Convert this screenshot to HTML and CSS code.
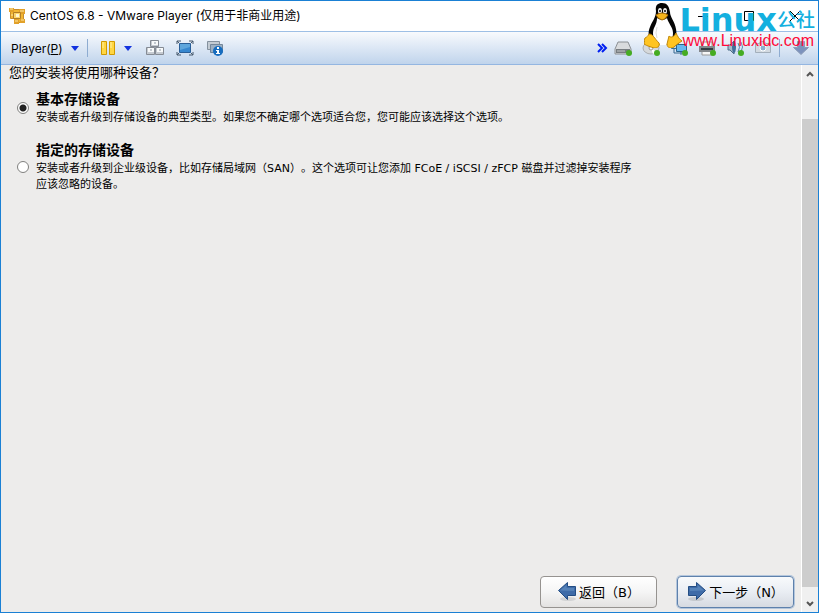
FILE: index.html
```html
<!DOCTYPE html>
<html lang="zh-CN">
<head>
    <meta charset="UTF-8">
    <meta name="viewport" content="width=device-width, initial-scale=1.0">
    <title>CentOS 6.8 - VMware Player</title>
    <link rel="stylesheet" href="styles.css">
</head>
<body>
    <div class="window">
        <header class="title-bar">
            <svg class="app-icon" viewBox="0 0 16 16">
                <path d="M1.500 1.500h9v3h4v10h-8v-4h-5z" fill="#f2b632" stroke="#c78d2c"/>
                <path d="M0 0h5v4H0zM10 1h6v5h-6zM5 11h5v5H5zM11 11h5v4h-5z" fill="#e2a12a"/>
                <path d="M4.500 4.500h7v6h-7z" fill="#fbd56c" stroke="#b17d28"/>
                <path d="M7 6h3v3H7z" fill="#fff6d5"/>
                <path d="M1 1h3M11 3h4M6 13h3M12 12h3M2 7h2" stroke="#ffe9a4"/>
            </svg>
            <h1>CentOS 6.8 - VMware Player (仅用于非商业用途)</h1>
            <div class="window-controls">
                <button type="button" aria-label="Minimize"><svg viewBox="0 0 12 12"><path d="M1 6.500h10" stroke="#000"/></svg></button>
                <button type="button" aria-label="Maximize"><svg viewBox="0 0 12 12"><path d="M1.500 1.500h9v9h-9z" fill="none" stroke="#000"/></svg></button>
                <button type="button" aria-label="Close"><svg viewBox="0 0 12 12"><path d="M1 1l10 10M11 1L1 11" stroke="#000"/></svg></button>
            </div>
        </header>

        <nav class="toolbar">
            <div class="tools">
                <button type="button" class="player-menu"><span>Player(<u>P</u>)</span><svg class="caret" viewBox="0 0 8 5"><path d="M0 0h8L4 5z" fill="#1232df"/></svg></button>
                <span class="separator"></span>
                <button type="button" class="pause" aria-label="Pause">
                    <svg class="pause-icon" viewBox="0 0 16 16"><path d="M1.500 1.500h5v13h-5zM9.500 1.500h5v13h-5z" fill="#ffd643" stroke="#d19a00"/><path d="M3 2v6M11 2v6" stroke="#fff0a2"/></svg>
                    <svg class="caret" viewBox="0 0 8 5"><path d="M0 0h8L4 5z" fill="#1232df"/></svg>
                </button>
                <button type="button" aria-label="Send Ctrl+Alt+Del">
                    <svg viewBox="0 0 18 16"><path d="M4.500 6.500v-6h8v6zM.5 14.500v-7h8v7zM9.500 14.500v-7h8v7z" fill="#c5cad1" stroke="#858b94"/><path d="M6 1h6v4H6zM2 8h6v4H2zM11 8h6v4h-6z" fill="#f8fafb"/><path d="M8 3h2M4 10h2M13 10h2" stroke="#8d98a6"/></svg>
                </button>
                <button type="button" aria-label="Full screen">
                    <svg viewBox="0 0 18 16"><path d="M3.500 3.500h11v9h-11z" fill="#3787cf" stroke="#2a5f98"/><path d="M4 4h10v3L4 10z" fill="#5ea6dc"/><path d="M1 4V1h4M13 1h4v3M17 12v3h-4M5 15H1v-3M1 1l2 2M17 1l-2 2M1 15l2-2M17 15l-2-2" fill="none" stroke="#46586c"/></svg>
                </button>
                <button type="button" aria-label="Unity">
                    <svg viewBox="0 0 18 16"><path d="M1.500 1.500h12v8h-12z" fill="#c3cbd3" stroke="#84919e"/><path d="M4.500 4.500h12v8h-12z" fill="#9db0c3" stroke="#74879a"/><circle cx="12" cy="11" r="5" fill="#176dbf"/><path d="M11 7h2v2h-2zM11 10h2v3h1v1h-4v-1h1v-2h-1v-1z" fill="#fff"/></svg>
                </button>
            </div>
            <div class="devices">
                <button type="button" class="more" aria-label="More"><svg viewBox="0 0 18 16"><path d="M5 4l4 4-4 4M9 4l4 4-4 4" fill="none" stroke="#001ff0" stroke-width="2"/></svg></button>
                <button type="button" aria-label="Hard disk"><svg viewBox="0 0 18 16"><path d="M4 2h10l3 7v5H1V9z" fill="#d9dbdd" stroke="#8c9094"/><path d="M2 9h14v4H2z" fill="#777c80"/><path d="M3 11h8" stroke="#c5c8c9"/><circle cx="15" cy="13" r="3" fill="#45ac22"/></svg></button>
                <button type="button" aria-label="CD/DVD"><svg viewBox="0 0 18 16"><ellipse cx="9" cy="8" rx="8" ry="6" fill="#d6d9db" stroke="#a9adb1"/><path d="M9 8L3 4l4-2zM9 8l6 4-4 2z" fill="#fff"/><circle cx="9" cy="8" r="2" fill="#f7f8f8" stroke="#999"/><circle cx="15" cy="13" r="3" fill="#45ac22"/></svg></button>
                <button type="button" aria-label="Network"><svg viewBox="0 0 18 16"><path d="M1.500 2.500h7v6h-7z" fill="#bad8ec" stroke="#356a93"/><path d="M6.500 4.500h10v7h-10z" fill="#65b8f0" stroke="#28638c"/><path d="M4 8v5h8M11 12v3" fill="none" stroke="#37698f"/><circle cx="15" cy="13" r="3" fill="#45ac22"/></svg></button>
                <button type="button" aria-label="Printer"><svg viewBox="0 0 18 16"><path d="M4 2h10v5H4zM4 10h10v5H4z" fill="#f6f6f6" stroke="#999"/><path d="M1 6h16v6H1z" fill="#83878b"/><path d="M3 9h12" stroke="#343e44" stroke-width="2"/><circle cx="15" cy="13" r="3" fill="#45ac22"/></svg></button>
                <button type="button" aria-label="Sound"><svg viewBox="0 0 18 16"><path d="M2 5h2l4-4v13l-4-4H2z" fill="#a9bac8" stroke="#4d6e89"/><ellipse cx="8" cy="7" rx="2" ry="6" fill="#416f9a"/><path d="M12 3q3 4 0 9M15 2q3 5 0 10" fill="none" stroke="#5284b4"/><circle cx="15" cy="13" r="3" fill="#45ac22"/></svg></button>
                <button type="button" aria-label="Camera"><svg viewBox="0 0 18 16"><path d="M1.500 3.500h4l1-2h4l1 2h5v9h-15z" fill="#d3dae1" stroke="#a3afbb"/><circle cx="9" cy="8" r="3" fill="#8aafce" stroke="#fff"/></svg></button>
                <span class="separator"></span>
                <button type="button" class="expand" aria-label="Show devices"><svg viewBox="0 0 18 16"><path d="M5.500 1.500h7v6h4L9 14.500 1.500 7.500h4z" fill="#7c92bd" stroke="#8d9db8"/></svg></button>
            </div>
        </nav>

        <div class="guest">
            <main class="installer">
                <form class="storage-form">
                    <fieldset>
                        <legend>您的安装将使用哪种设备？</legend>
                        <div class="option">
                            <input type="radio" id="basic" name="storage" checked>
                            <label for="basic"><strong>基本存储设备</strong><span>安装或者升级到存储设备的典型类型。如果您不确定哪个选项适合您，您可能应该选择这个选项。</span></label>
                        </div>
                        <div class="option">
                            <input type="radio" id="specialized" name="storage">
                            <label for="specialized"><strong>指定的存储设备</strong><span>安装或者升级到企业级设备，比如存储局域网（SAN）。这个选项可让您添加 FCoE / iSCSI / zFCP 磁盘并过滤掉安装程序应该忽略的设备。</span></label>
                        </div>
                    </fieldset>
                    <div class="actions">
                        <button type="button" class="btn"><svg viewBox="0 0 20 20"><ellipse cx="11" cy="18" rx="8" ry="2" fill="#d3d4d5"/><path d="M1.500 9.500l9-8v4h8v9h-8v4z" fill="#3e6ba8" stroke="#234d84"/><path d="M3 9.500L9.500 4v3H17v3z" fill="#5683b9"/></svg>返回（B）</button>
                        <button type="button" class="btn btn-next"><svg viewBox="0 0 20 20"><ellipse cx="9" cy="18" rx="8" ry="2" fill="#c5c9ce"/><path d="M18.500 9.500l-9-8v4h-8v9h8v4z" fill="#3e6ba8" stroke="#234d84"/><path d="M17 9.500L10.500 4v3H3v3z" fill="#5683b9"/></svg>下一步（N）</button>
                    </div>
                </form>
            </main>
            <aside class="scrollbar">
                <button type="button" aria-label="Scroll up"><svg viewBox="0 0 8 8"><path d="M1 6l3-3 3 3" fill="none" stroke="#555" stroke-width="2"/></svg></button>
                <div class="track"><div class="thumb"></div></div>
                <button type="button" aria-label="Scroll down"><svg viewBox="0 0 8 8"><path d="M1 2l3 3 3-3" fill="none" stroke="#555" stroke-width="2"/></svg></button>
            </aside>
        </div>

        <div class="watermark">
            <svg viewBox="0 0 38 46">
                <path d="M12 9C11 3 14 1 18 1c5 0 7 3 8 9 0 5 5 10 6 17 1 5 0 10-3 13l-6 3H14l-7-5c-3-4-3-8-1-13 2-6 6-9 6-16z" fill="#050505"/>
                <path d="M13 16c3 2 8 2 10 0 1 5 6 9 6 15 0 6-3 11-7 12h-6c-5-2-7-7-7-12 0-6 4-8 4-15z" fill="#fff"/>
                <path d="M13 25q-2 6 0 11" fill="none" stroke="#ddd"/>
                <ellipse cx="16" cy="9" rx="2" ry="3" fill="#eee"/><ellipse cx="21" cy="9" rx="2" ry="3" fill="#eee"/>
                <circle cx="16" cy="9" r="1"/><circle cx="21" cy="9" r="1"/>
                <path d="M12 13q6-4 12 0-3 5-6 5-4-1-6-5z" fill="#f6b51b" stroke="#a66b05"/>
                <path d="M5 32c4 0 5 4 10 9 1 3-1 5-5 5-3-1-7-2-10-4 1-2 0-5 1-6 2-1 3-2 4-4z" fill="#ffc421" stroke="#c18708"/>
                <path d="M25 34c2 2 5 1 7-3 2 4 3 6 6 8-3 2-5 3-8 6-3 2-7 1-7-3z" fill="#ffc421" stroke="#c18708"/>
            </svg>
            <div class="watermark-text">
                <div class="brand"><b>Linux</b><span>公社</span></div>
                <div class="url">www.Linuxidc.com</div>
            </div>
        </div>
    </div>
</body>
</html>
```
FILE: styles.css
```css
* {
    margin: 0;
    padding: 0;
    box-sizing: border-box;
}

body {
    font-family: "DejaVu Sans", "Noto Sans CJK SC", sans-serif;
    font-size: 12px;
    color: #000;
    text-spacing-trim: space-all;
}

button {
    display: flex;
    align-items: center;
    justify-content: center;
    border: none;
    background: none;
    font: inherit;
    color: inherit;
    text-spacing-trim: inherit;
}

svg {
    display: block;
    flex-shrink: 0;
}

.window {
    position: relative;
    display: flex;
    flex-direction: column;
    min-height: 100vh;
    border: 1px solid #1a80d4;
    background: #edeceb;
}

/* Title bar */
.title-bar {
    display: flex;
    align-items: center;
    height: 30px;
    padding-left: 8px;
    gap: 5px;
    background: #fff;
}

.title-bar h1 {
    flex: 1;
    font-family: "Inter", "Noto Sans CJK SC", sans-serif;
    font-size: 12px;
    font-weight: normal;
    line-height: 16px;
}

.app-icon {
    width: 16px;
    height: 16px;
}

.window-controls {
    display: flex;
}

.window-controls button {
    width: 46px;
    height: 30px;
}

.window-controls svg {
    width: 12px;
    height: 12px;
}

/* Toolbar */
.toolbar {
    display: flex;
    align-items: center;
    justify-content: space-between;
    height: 34px;
    border-top: 1px solid #9ebfe5;
    border-bottom: 1px solid #94b6e1;
    background: linear-gradient(#f8fafd, #c0d4ec);
}

.tools,
.devices {
    display: flex;
    align-items: center;
}

.tools {
    padding-left: 10px;
}

.tools button {
    width: 30px;
}

.tools .player-menu {
    width: auto;
    gap: 8px;
    font-family: "Inter", sans-serif;
}

.tools .pause {
    width: 48px;
    gap: 8px;
}

.toolbar svg {
    width: 18px;
    height: 16px;
}

.toolbar .pause-icon {
    width: 16px;
}

.toolbar .caret {
    width: 8px;
    height: 5px;
}

.separator {
    width: 1px;
    height: 18px;
    margin: 0 4px 0 8px;
    background: #8eacd1;
}

.devices {
    padding-right: 4px;
}

.devices button {
    width: 28px;
}

.devices .more {
    width: 14px;
}

.devices .separator {
    margin: 0 8px 0 2px;
}

.devices .expand {
    width: 26px;
}

/* Guest screen */
.guest {
    display: flex;
    flex: 1;
}

.installer {
    display: flex;
    flex: 1;
}

.storage-form {
    display: flex;
    flex: 1;
    flex-direction: column;
    justify-content: space-between;
    padding: 0 7px 4px 8px;
}

fieldset {
    border: none;
}

legend {
    margin-bottom: 9px;
    font-size: 13px;
    line-height: 16px;
}

.option {
    display: flex;
    align-items: center;
    gap: 7px;
    max-width: 632px;
    margin-bottom: 15px;
    padding-left: 8px;
}

.option input {
    appearance: none;
    flex-shrink: 0;
    width: 12px;
    height: 12px;
    border: 1px solid #80807e;
    border-radius: 50%;
    background: #fff;
}

.option input:checked {
    background: radial-gradient(circle, #222 0 3px, #fff 4px);
}

.option label {
    display: flex;
    flex-direction: column;
    gap: 2px;
}

.option strong {
    font-size: 14px;
    line-height: 18px;
}

.option span {
    font-size: 11px;
    line-height: 16px;
}

.actions {
    display: flex;
    justify-content: flex-end;
    gap: 20px;
}

.btn {
    width: 117px;
    height: 32px;
    gap: 2px;
    padding-bottom: 2px;
    border: 1px solid #969390;
    border-radius: 4px;
    background: linear-gradient(#fff, #f5f5f5 50%, #e3e2e1);
    font-size: 13px;
}

.btn svg {
    width: 20px;
    height: 20px;
}

.btn-next {
    border-color: #5e81ac;
    background: linear-gradient(#f8fafc, #e9edf3 50%, #d6dae1);
    box-shadow: 0 0 0 1px #b4c6dc;
}

/* Scrollbar */
.scrollbar {
    display: flex;
    flex-direction: column;
    width: 17px;
    border-left: 1px solid #fff;
    background: #f0f0f0;
}

.scrollbar button {
    width: 100%;
    height: 17px;
}

.scrollbar svg {
    width: 8px;
    height: 8px;
}

.track {
    display: flex;
    flex: 1;
    flex-direction: column;
    padding: 37px 0 8px;
}

.thumb {
    flex: 1;
    background: #cdcdcd;
}

/* Site logo laid over the window corner */
.watermark {
    position: absolute;
    top: 1px;
    right: 3px;
    display: flex;
    pointer-events: none;
}

.watermark svg {
    width: 38px;
    height: 46px;
}

.brand {
    display: flex;
    align-items: center;
    height: 30px;
    padding-top: 6px;
    color: #14b0df;
}

.brand b {
    margin-left: -3px;
    font-size: 32px;
    line-height: 30px;
}

.brand span {
    font-size: 19px;
    font-weight: 500;
    line-height: 30px;
}

.url {
    font-family: "Liberation Sans", sans-serif;
    font-size: 16px;
    line-height: 18px;
    color: #ff0938;
}
```
